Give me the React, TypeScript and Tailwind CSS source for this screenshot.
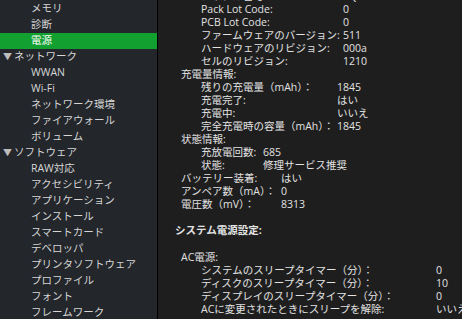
import React from "react";

const font = { fontFamily: '"Open Sans", "Noto Sans CJK JP", sans-serif' };

type Item = { label: string; level: 0 | 1; open?: boolean; selected?: boolean };

const sidebar: Item[] = [
  { label: "メモリ", level: 1 },
  { label: "診断", level: 1 },
  { label: "電源", level: 1, selected: true },
  { label: "ネットワーク", level: 0, open: true },
  { label: "WWAN", level: 1 },
  { label: "Wi-Fi", level: 1 },
  { label: "ネットワーク環境", level: 1 },
  { label: "ファイアウォール", level: 1 },
  { label: "ボリューム", level: 1 },
  { label: "ソフトウェア", level: 0, open: true },
  { label: "RAW対応", level: 1 },
  { label: "アクセシビリティ", level: 1 },
  { label: "アプリケーション", level: 1 },
  { label: "インストール", level: 1 },
  { label: "スマートカード", level: 1 },
  { label: "デベロッパ", level: 1 },
  { label: "プリンタソフトウェア", level: 1 },
  { label: "プロファイル", level: 1 },
  { label: "フォント", level: 1 },
  { label: "フレームワーク", level: 1 },
];

function Row({
  label,
  value,
  indent,
  labelW,
  bold,
}: {
  label: string;
  value?: string;
  indent: string;
  labelW?: string;
  bold?: boolean;
}) {
  return (
    <div className={`flex h-[13px] items-center whitespace-nowrap leading-[13px] ${indent}`}>
      <span className={`${labelW ?? ""} shrink-0 ${bold ? "font-bold" : ""}`}>{label}</span>
      {value !== undefined && <span>{value}</span>}
    </div>
  );
}

export default function App() {
  return (
    <div className="flex h-[319px] w-[462px] overflow-hidden bg-[#1e1e1e] text-[10.5px]" style={font}>
      <div className="flex w-[157px] shrink-0 flex-col bg-[#23262b] pt-px text-[#d6d6d6]">
        {sidebar.map((it, i) => (
          <div
            key={i}
            className={`flex h-4 shrink-0 items-center whitespace-nowrap ${
              it.selected ? "bg-[#12a030] text-white" : ""
            } ${it.level === 1 ? "pl-[31px]" : "pl-[3px]"}`}
          >
            {it.level === 0 && <span className="mr-[2px] text-[9px] text-[#bdbdbd]">▼</span>}
            <span>{it.label}</span>
          </div>
        ))}
      </div>
      <div className="w-px shrink-0 bg-black" />
      <div className="flex min-w-0 flex-1 flex-col overflow-hidden text-[#e2e2e2]">
        <div className="-mt-[10px] flex flex-col">
          <Row indent="pl-[43px]" labelW="w-[142px]" label="シリアル番号:" value="3Q2024S4" />
          <Row indent="pl-[43px]" labelW="w-[142px]" label="Pack Lot Code:" value="0" />
          <Row indent="pl-[43px]" labelW="w-[142px]" label="PCB Lot Code:" value="0" />
          <Row indent="pl-[43px]" labelW="w-[142px]" label="ファームウェアのバージョン:" value="511" />
          <Row indent="pl-[43px]" labelW="w-[142px]" label="ハードウェアのリビジョン:" value="000a" />
          <Row indent="pl-[43px]" labelW="w-[142px]" label="セルのリビジョン:" value="1210" />
          <Row indent="pl-[23px]" label="充電量情報:" />
          <Row indent="pl-[43px]" labelW="w-[136px]" label="残りの充電量（mAh）：" value="1845" />
          <Row indent="pl-[43px]" labelW="w-[136px]" label="充電完了:" value="はい" />
          <Row indent="pl-[43px]" labelW="w-[136px]" label="充電中:" value="いいえ" />
          <Row indent="pl-[43px]" labelW="w-[136px]" label="完全充電時の容量（mAh）：" value="1845" />
          <Row indent="pl-[23px]" label="状態情報:" />
          <Row indent="pl-[43px]" labelW="w-[62px]" label="充放電回数:" value="685" />
          <Row indent="pl-[43px]" labelW="w-[62px]" label="状態:" value="修理サービス推奨" />
          <Row indent="pl-[23px]" labelW="w-[100px]" label="バッテリー装着:" value="はい" />
          <Row indent="pl-[23px]" labelW="w-[100px]" label="アンペア数（mA）：" value="0" />
          <Row indent="pl-[23px]" labelW="w-[100px]" label="電圧数（mV）：" value="8313" />
          <div className="h-[13px]" />
          <Row indent="pl-[17px]" label="システム電源設定:" bold />
          <div className="h-[14px]" />
          <Row indent="pl-[23px]" label="AC電源:" />
          <Row indent="pl-[43px]" labelW="w-[235px]" label="システムのスリープタイマー（分）：" value="0" />
          <Row indent="pl-[43px]" labelW="w-[235px]" label="ディスクのスリープタイマー（分）：" value="10" />
          <Row indent="pl-[43px]" labelW="w-[235px]" label="ディスプレイのスリープタイマー（分）：" value="0" />
          <Row indent="pl-[43px]" labelW="w-[235px]" label="ACに変更されたときにスリープを解除:" value="いいえ" />
        </div>
      </div>
    </div>
  );
}
